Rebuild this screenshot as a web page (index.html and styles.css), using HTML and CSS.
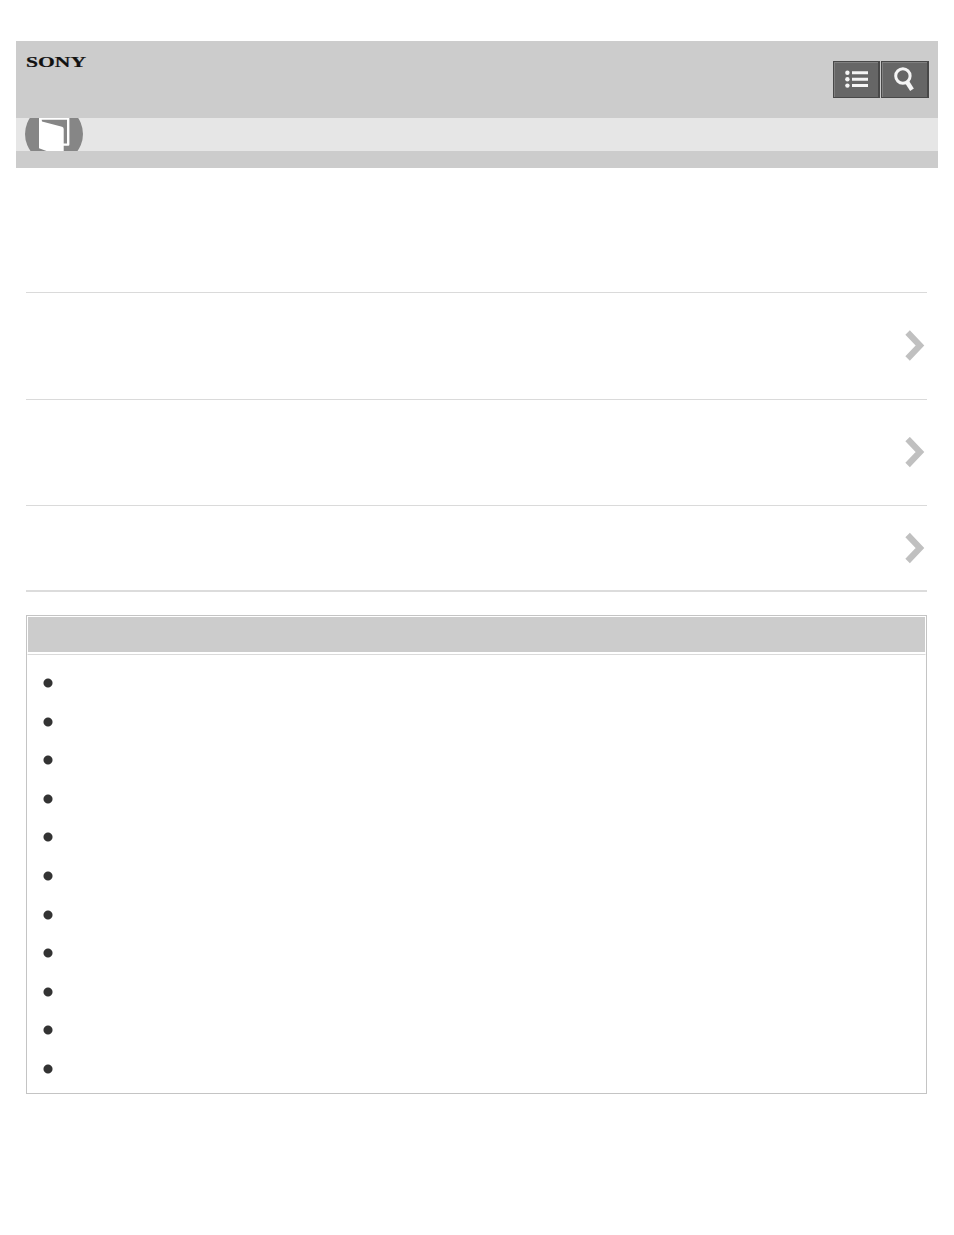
FILE: index.html
```html
<!DOCTYPE html>
<html lang="en">
<head>
    <meta charset="UTF-8">
    <meta name="viewport" content="width=device-width, initial-scale=1.0">
    <title>SONY</title>
    <link rel="stylesheet" href="styles.css">
</head>
<body>

    <header class="header">
        <div class="header-top">
            <svg class="logo" width="62" height="14" viewBox="0 0 62 14">
                <text x="0" y="11" textLength="60" lengthAdjust="spacingAndGlyphs">SONY</text>
            </svg>
            <nav class="header-buttons">
                <a class="button button-menu">
                    <svg width="44" height="35" viewBox="0 0 44 35">
                        <g fill="#f5f5f5">
                            <circle cx="13.4" cy="10.7" r="2.2"/>
                            <circle cx="13.4" cy="17.2" r="2.2"/>
                            <circle cx="13.4" cy="23.6" r="2.2"/>
                            <path d="M18 9.2h16v3H18zM18 15.7h16v3H18zM18 22.1h16v3H18z"/>
                        </g>
                    </svg>
                </a>
                <a class="button button-search">
                    <svg width="45" height="35" viewBox="0 0 45 35">
                        <g fill="none" stroke="#f5f5f5">
                            <circle cx="20.9" cy="14" r="7.2" stroke-width="3"/>
                            <path d="M24.9 19.8L30 27.8" stroke-width="4.4"/>
                        </g>
                    </svg>
                </a>
            </nav>
        </div>
        <div class="title-bar">
            <svg class="book" width="58" height="33" viewBox="0 0 58 33">
                <ellipse cx="29" cy="16" rx="29" ry="29" fill="#868686"/>
                <path d="M15.2 .6H43.2V26.6H37" fill="none" stroke="#fff" stroke-width="2.4" stroke-linejoin="round"/>
                <path d="M14 0V30.3L21.5 33H38.7V11Q38.7 9.2 37 8.8L17 3.5L16.4 0z" fill="#fff"/>
            </svg>
        </div>
    </header>

    <main class="content">
        <ul class="links">
            <li><svg class="arrow" width="20" height="32" viewBox="0 0 20 32"><path d="M2.6 2.5L15 15.5L2.6 28.5"/></svg></li>
            <li><svg class="arrow" width="20" height="32" viewBox="0 0 20 32"><path d="M2.6 2L15 15L2.6 28"/></svg></li>
            <li class="short"><svg class="arrow" width="20" height="32" viewBox="0 0 20 32"><path d="M2.6 3L15 16L2.6 29"/></svg></li>
        </ul>

        <section class="box">
            <div class="box-title"></div>
            <ul class="box-list">
                <li></li>
                <li></li>
                <li></li>
                <li></li>
                <li></li>
                <li></li>
                <li></li>
                <li></li>
                <li></li>
                <li></li>
                <li></li>
            </ul>
        </section>
    </main>

</body>
</html>
```
FILE: styles.css
```css
* {
    box-sizing: border-box;
}

body {
    margin: 0;
    padding: 41px 16px 0;
    background-color: #fff;
    font-family: "Liberation Sans", Arial, sans-serif;
}

ul {
    margin: 0;
    padding: 0;
    list-style: none;
}

svg {
    display: block;
}

/* Header */
.header {
    height: 127px;
    background-color: #ccc;
}

.header-top {
    display: flex;
    justify-content: space-between;
    align-items: flex-start;
    height: 77px;
    padding: 15px 9px 0 10px;
}

.logo text {
    font-family: "Liberation Serif", "Times New Roman", serif;
    font-size: 14px;
    font-weight: bold;
    fill: #111;
    stroke: #111;
    stroke-width: 0.2;
}

.header-buttons {
    display: flex;
    gap: 1px;
    margin-top: 5px;
}

.button {
    width: 48px;
    height: 37px;
    border: 1px solid #484848;
    border-right-width: 2px;
    background-color: #666;
    box-shadow: inset 1px 1px 0 #808080;
}

.button-menu {
    width: 47px;
}

/* Grey strip with the book icon, cut off at both edges */
.title-bar {
    height: 33px;
    padding-left: 9px;
    background-color: #e6e6e6;
    overflow: hidden;
}

/* Link rows */
.content {
    padding: 124px 11px 0 10px;
}

.links {
    border-bottom: 2px solid #dcdcdc;
}

.links li {
    display: flex;
    align-items: center;
    justify-content: flex-end;
    height: 106px;
    padding-right: 2px;
    border-top: 1px solid #dadada;
}

.links li:first-child {
    height: 107px;
}

.links .short {
    height: 85px;
}

.arrow path {
    fill: none;
    stroke: #c0c0c0;
    stroke-width: 6.2;
}

/* Box with bullets */
.box {
    height: 479px;
    margin-top: 23px;
    border: 1px solid #c4c4c4;
}

.box-title {
    height: 39px;
    border: 1px solid #fff;
    border-bottom: 1px solid #dadada;
    background: linear-gradient(#ccc, #ccc) top / 100% 35px no-repeat;
}

.box-list {
    padding: 9px 0 0 16px;
}

.box-list li {
    display: flex;
    align-items: center;
    height: 38.55px;
}

.box-list li::before {
    content: "";
    width: 10px;
    height: 10px;
    background: radial-gradient(circle, #333 4px, transparent 5px);
}
```
